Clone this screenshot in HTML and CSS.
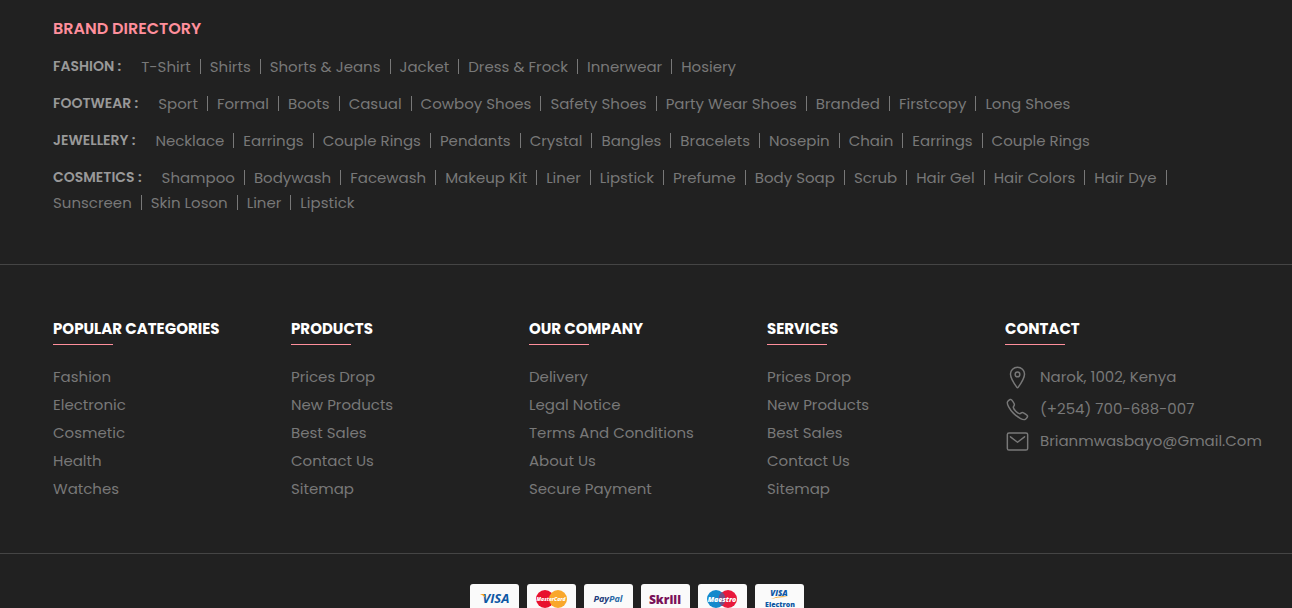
FILE: index.html
```html
<!DOCTYPE html>
<html lang="en">
<head>
<meta charset="utf-8">
<meta name="viewport" content="width=device-width, initial-scale=1">
<title>Shop footer</title>
<link rel="stylesheet" href="styles.css">
</head>
<body>
<footer class="footer">
  <section class="directory">
    <h2 class="directory-title">Brand Directory</h2>
    <div class="directory-row">
      <h3 class="directory-label">Fashion :</h3>
      <a href="#">T-Shirt</a><a href="#">Shirts</a><a href="#">Shorts &amp; Jeans</a><a href="#">Jacket</a><a href="#">Dress &amp; Frock</a><a href="#">Innerwear</a><a href="#">Hosiery</a>
    </div>
    <div class="directory-row">
      <h3 class="directory-label">Footwear :</h3>
      <a href="#">Sport</a><a href="#">Formal</a><a href="#">Boots</a><a href="#">Casual</a><a href="#">Cowboy Shoes</a><a href="#">Safety Shoes</a><a href="#">Party Wear Shoes</a><a href="#">Branded</a><a href="#">Firstcopy</a><a href="#">Long Shoes</a>
    </div>
    <div class="directory-row">
      <h3 class="directory-label">Jewellery :</h3>
      <a href="#">Necklace</a><a href="#">Earrings</a><a href="#">Couple Rings</a><a href="#">Pendants</a><a href="#">Crystal</a><a href="#">Bangles</a><a href="#">Bracelets</a><a href="#">Nosepin</a><a href="#">Chain</a><a href="#">Earrings</a><a href="#">Couple Rings</a>
    </div>
    <div class="directory-row">
      <h3 class="directory-label">Cosmetics :</h3>
      <a href="#">Shampoo</a><a href="#">Bodywash</a><a href="#">Facewash</a><a href="#">Makeup Kit</a><a href="#">Liner</a><a href="#">Lipstick</a><a href="#">Prefume</a><a href="#">Body Soap</a><a href="#">Scrub</a><a href="#">Hair Gel</a><a href="#">Hair Colors</a><a href="#">Hair Dye</a><a href="#">Sunscreen</a><a href="#">Skin Loson</a><a href="#">Liner</a><a href="#">Lipstick</a>
    </div>
  </section>

  <section class="nav">
    <div class="nav-column">
      <h2 class="nav-title">Popular Categories</h2>
      <ul class="nav-list">
        <li><a href="#">Fashion</a></li><li><a href="#">Electronic</a></li><li><a href="#">Cosmetic</a></li><li><a href="#">Health</a></li><li><a href="#">Watches</a></li>
      </ul>
    </div>
    <div class="nav-column">
      <h2 class="nav-title">Products</h2>
      <ul class="nav-list">
        <li><a href="#">Prices Drop</a></li><li><a href="#">New Products</a></li><li><a href="#">Best Sales</a></li><li><a href="#">Contact Us</a></li><li><a href="#">Sitemap</a></li>
      </ul>
    </div>
    <div class="nav-column">
      <h2 class="nav-title">Our Company</h2>
      <ul class="nav-list">
        <li><a href="#">Delivery</a></li><li><a href="#">Legal Notice</a></li><li><a href="#">Terms And Conditions</a></li><li><a href="#">About Us</a></li><li><a href="#">Secure Payment</a></li>
      </ul>
    </div>
    <div class="nav-column">
      <h2 class="nav-title">Services</h2>
      <ul class="nav-list">
        <li><a href="#">Prices Drop</a></li><li><a href="#">New Products</a></li><li><a href="#">Best Sales</a></li><li><a href="#">Contact Us</a></li><li><a href="#">Sitemap</a></li>
      </ul>
    </div>
    <div class="nav-column">
      <h2 class="nav-title">Contact</h2>
      <address class="contact">
        <div class="contact-item">
          <svg class="contact-icon" viewBox="0 0 512 512" aria-hidden="true"><path d="M256 48c-79.5 0-144 61.39-144 137 0 87 96 224.87 131.25 272.49a15.77 15.77 0 0025.5 0C304 409.89 400 272.07 400 185c0-75.61-64.5-137-144-137z"/><circle cx="256" cy="192" r="48"/></svg>
          <span>Narok, 1002, Kenya</span>
        </div>
        <div class="contact-item">
          <svg class="contact-icon" viewBox="0 0 512 512" aria-hidden="true"><path d="M451 374c-15.88-16-54.34-39.35-73-48.76-24.3-12.24-26.3-13.24-45.4.95-12.74 9.47-21.21 17.93-36.12 14.75s-47.31-21.11-75.68-49.39-47.34-61.62-50.53-76.48 5.41-23.23 14.79-36c13.22-18 12.22-21 .92-45.3-8.81-18.9-32.84-57-48.9-72.8C119.9 44 119.9 47 108.83 51.6A160.15 160.15 0 0083 65.37C67 76 58.12 84.83 51.91 98.1s-9 44.38 23.07 102.64 54.57 88.05 101.14 134.49S258.5 406.64 310.85 436c64.76 36.27 89.6 29.2 102.91 23s22.18-15 32.83-31a159.09 159.09 0 0013.8-25.8C465 391.17 468 391.17 451 374z"/></svg>
          <a href="tel:+254700688007">(+254) 700-688-007</a>
        </div>
        <div class="contact-item">
          <svg class="contact-icon" viewBox="0 0 512 512" aria-hidden="true"><rect x="48" y="80" width="416" height="352" rx="34"/><path d="M112 160l144 112 144-112"/></svg>
          <a href="mailto:brianmwasbayo@gmail.com">Brianmwasbayo@Gmail.Com</a>
        </div>
      </address>
    </div>
  </section>

  <section class="payments" aria-label="Payment methods">
    <svg class="card" viewBox="0 0 49 31"><text x="26" y="19" class="visa">VISA</text><path d="M10 10h4l2 5c-1-2-3-4-6-5z" fill="#f7a11b"/></svg>
    <svg class="card" viewBox="0 0 49 31"><circle cx="18" cy="15" r="9" fill="#e8112d"/><circle cx="31" cy="15" r="9" fill="#f9a72b"/><text x="24" y="17" class="mastercard">MasterCard</text></svg>
    <svg class="card" viewBox="0 0 49 31"><text x="24" y="18" class="paypal">Pay<tspan fill="#2a6aa8">Pal</tspan></text></svg>
    <svg class="card" viewBox="0 0 49 31"><text x="24" y="20" class="skrill">Skrill</text></svg>
    <svg class="card" viewBox="0 0 49 31"><circle cx="18" cy="15" r="9" fill="#1489cc"/><circle cx="30" cy="15" r="9" fill="#e8193c"/><path d="M24 8a9 9 0 010 14a9 9 0 010-14z" fill="#744f85"/><text x="24" y="18" class="maestro">Maestro</text></svg>
    <svg class="card" viewBox="0 0 49 31"><text x="24" y="12" class="visa-small">VISA</text><path d="M16 15q8-4 17-2q-9-.5-17 2z" fill="#f7a11b"/><text x="25" y="23" class="electron">Electron</text></svg>
  </section>
</footer>
</body>
</html>
```
FILE: styles.css
```css
* { box-sizing: border-box; margin: 0; padding: 0; }
html { scrollbar-width: none; }
body {
  background: #212121;
  color: #787878;
  font-family: Poppins, Inter, sans-serif;
  font-size: 15px;
  line-height: 25px;
}
a { color: inherit; text-decoration: none; white-space: nowrap; }
ul { list-style: none; }

.directory { padding: 16px 79px 49px 53px; border-bottom: 1px solid #454545; }
.directory-title {
  margin-bottom: 13px;
  color: #ff8f9c;
  font-size: 16px;
  font-weight: 600;
  text-transform: uppercase;
}
.directory-row { display: flex; flex-wrap: wrap; margin-bottom: 12px; }
.directory-row:last-child { margin-bottom: 0; }
.directory-label {
  margin-right: 20px;
  color: #999;
  font-size: 14px;
  font-weight: 600;
  text-transform: uppercase;
}
.directory-row a { display: flex; align-items: center; margin-right: 9px; }
.directory-row a:not(:last-child)::after {
  content: "";
  width: 1px;
  height: 15px;
  margin-left: 9px;
  background: #787878;
}

.nav {
  display: grid;
  grid-template-columns: repeat(5, minmax(0, 1fr));
  gap: 30px;
  padding: 51px 79px 50px 53px;
  border-bottom: 1px solid #454545;
}
.nav-title {
  margin-bottom: 18px;
  color: #fff;
  font-size: 15px;
  font-weight: 700;
  line-height: 26px;
  text-transform: uppercase;
  white-space: nowrap;
}
.nav-title::after {
  content: "";
  display: block;
  width: 60px;
  height: 1px;
  margin-top: 2px;
  background: #ff8f9c;
}
.nav-list li { line-height: 28px; }
.contact { padding-top: 1px; font-style: normal; }
.contact-item { display: flex; gap: 10px; margin-bottom: 6px; white-space: nowrap; }
.contact-icon {
  flex: none;
  width: 25px;
  height: 25px;
  margin-top: 1px;
  fill: none;
  stroke: currentColor;
  stroke-width: 30;
  stroke-linecap: round;
  stroke-linejoin: round;
}

.payments { display: flex; justify-content: center; gap: 8px; padding: 30px 70px 30px 52px; }
.card { width: 49px; height: 31px; border-radius: 3px; background: #fafafa; }
.card text { text-anchor: middle; font-family: "Open Sans", sans-serif; font-weight: 800; }
.card .visa { fill: #0d57a4; font-size: 13px; font-weight: 700; font-style: italic; }
.card .mastercard { fill: #fff; font-size: 5px; font-style: italic; }
.card .paypal { fill: #1c3a7a; font-size: 9px; font-weight: 700; font-style: italic; }
.card .skrill { fill: #7a1259; font-size: 12px; }
.card .maestro { fill: #fff; font-size: 7px; font-style: italic; }
.card .visa-small { fill: #0d57a4; font-size: 8px; font-style: italic; }
.card .electron { fill: #0d57a4; font-size: 7px; }
```
